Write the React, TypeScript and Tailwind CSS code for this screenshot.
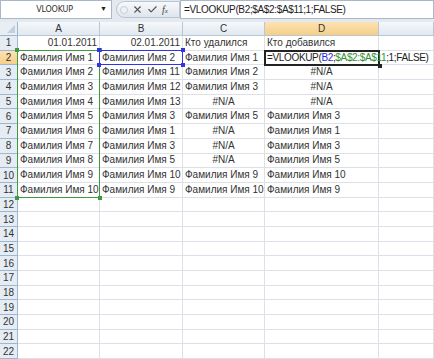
import React from 'react';
import { X, Check } from 'lucide-react';

type Align = 'l' | 'r' | 'c';
type Cell = { t: string; a?: Align } | null;

const fio = (n: number): Cell => ({ t: `Фамилия Имя ${n}` });
const na: Cell = { t: '#N/A', a: 'c' };

const rows: Cell[][] = [
  [{ t: '01.01.2011', a: 'r' }, { t: '02.01.2011', a: 'r' }, { t: 'Кто удалился' }, { t: 'Кто добавился' }],
  [fio(1), fio(2), fio(1), null],
  [fio(2), fio(11), fio(2), na],
  [fio(3), fio(12), fio(3), na],
  [fio(4), fio(13), na, na],
  [fio(5), fio(3), fio(5), fio(3)],
  [fio(6), fio(1), na, fio(1)],
  [fio(7), fio(3), na, fio(3)],
  [fio(8), fio(5), na, fio(5)],
  [fio(9), fio(10), fio(9), fio(10)],
  [fio(10), fio(9), fio(10), fio(9)],
];

const cols = ['A', 'B', 'C', 'D', ''];
const font = { fontFamily: '"Liberation Sans", Arial, sans-serif' };

const alignCls: Record<Align, string> = {
  l: 'justify-start',
  r: 'justify-end',
  c: 'justify-center',
};

const Handle = ({ pos, color }: { pos: string; color: string }) => (
  <span className={`absolute w-[4px] h-[4px] ${pos} ${color}`} />
);

const Corners = ({ color }: { color: string }) => (
  <>
    <Handle pos="-left-[3px] -top-[3px]" color={color} />
    <Handle pos="-right-[3px] -top-[3px]" color={color} />
    <Handle pos="-left-[3px] -bottom-[3px]" color={color} />
    <Handle pos="-right-[3px] -bottom-[3px]" color={color} />
  </>
);

const FormulaBar = () => (
  <div className="flex h-[22px] items-stretch bg-[#e4e9f0] pb-[3px]">
    <div className="flex w-[112px] items-center justify-between border border-[#a9b7c9] bg-white pl-2 pr-1">
      <span className="flex-1 text-center text-[8px] tracking-tight text-[#333]" style={{ fontFamily: '"DejaVu Sans", sans-serif' }}>
        VLOOKUP
      </span>
      <span className="text-[7px] text-[#222]">▼</span>
    </div>
    <div className="flex w-[68px] items-center pl-[4px]">
      <div className="flex h-[17px] w-full items-center gap-[4px] rounded-l-full border border-[#b8c4d4] bg-gradient-to-b from-[#f7f9fb] to-[#dfe5ec] pl-[3px]">
        <span className="h-[8px] w-[8px] rounded-full border border-[#c6ced8] bg-[#eef1f5]" />
        <X className="h-[11px] w-[11px] text-[#555]" strokeWidth={2.5} />
        <Check className="h-[11px] w-[11px] text-[#555]" strokeWidth={2.5} />
        <span className="text-[10px] italic text-[#444]" style={{ fontFamily: '"Liberation Serif", serif' }}>
          f<span className="text-[7px]">x</span>
        </span>
      </div>
    </div>
    <div className="flex flex-1 items-center border border-[#a9b7c9] bg-white pl-[3px] text-[10px] tracking-[-0.35px] text-[#222]">
      =VLOOKUP(B2;$A$2:$A$11;1;FALSE)
    </div>
  </div>
);

// overlays drawn inside the cell they start from
const overlay = (r: number, c: number) => {
  if (r === 1 && c === 0)
    return (
      <div className="pointer-events-none absolute -left-px -top-px z-10 h-[148px] w-[83px] border border-[#3f9a3f]">
        <Corners color="bg-[#3f9a3f]" />
      </div>
    );
  if (r === 1 && c === 1)
    return (
      <div className="pointer-events-none absolute -left-px -top-px z-10 h-[15.7px] w-[84px] border border-[#3333e6]">
        <Corners color="bg-[#3333e6]" />
      </div>
    );
  if (r === 1 && c === 3)
    return (
      <div className="absolute -left-px -top-px z-10 flex h-[16.7px] w-[116px] items-center whitespace-nowrap border-2 border-[#222] px-[1px] text-[10px] tracking-[-0.35px] leading-none text-[#222]">
        =VLOOKUP(<span className="text-[#2a2ad8]">B2</span>;<span className="text-[#2f8f2f]">$A$2:$A$11</span>;1;FALSE)
        <Handle pos="-right-[4px] -bottom-[4px]" color="bg-[#222]" />
      </div>
    );
  return null;
};

export default function App() {
  return (
    <div className="h-[359px] w-[434px] overflow-hidden bg-white" style={font}>
      <FormulaBar />
      <div className="grid grid-cols-[18px_82px_83px_82px_114px_1fr] grid-rows-[14px_repeat(22,14.7px)] bg-white">
        {/* column headers */}
        <div className="flex items-end justify-end border-b border-r border-[#9eb6ce] bg-[#e9eef5] p-[2px]">
          <span className="h-0 w-0 border-b-[8px] border-l-[8px] border-b-[#c4cfdd] border-l-transparent" />
        </div>
        {cols.map((c, i) => (
          <div
            key={i}
            className={`flex items-center justify-center border-b border-r border-[#b8c7d8] text-[10px] text-[#333] ${
              c === 'D' ? 'bg-gradient-to-b from-[#fbe3b2] to-[#f6cf87]' : 'bg-gradient-to-b from-[#f5f8fb] to-[#e2e8ef]'
            }`}
          >
            {c}
          </div>
        ))}
        {/* rows */}
        {Array.from({ length: 22 }, (_, r) => {
          const data = rows[r] || [];
          return (
            <React.Fragment key={r}>
              <div
                className={`flex items-center justify-center border-b border-r border-[#9eb6ce] text-[10px] text-[#333] ${
                  r === 1 ? 'bg-gradient-to-b from-[#fbe3b2] to-[#f6cf87]' : 'bg-[#e6ecf4]'
                }`}
              >
                {r + 1}
              </div>
              {Array.from({ length: 5 }, (_, c) => {
                const cell = data[c];
                return (
                  <div
                    key={c}
                    className={`relative flex items-center whitespace-nowrap border-b border-r border-[#dde1e7] px-[2px] text-[10px] leading-none text-[#333] ${
                      alignCls[cell?.a || 'l']
                    }`}
                  >
                    {cell?.t}
                    {overlay(r, c)}
                  </div>
                );
              })}
            </React.Fragment>
          );
        })}
      </div>
    </div>
  );
}
